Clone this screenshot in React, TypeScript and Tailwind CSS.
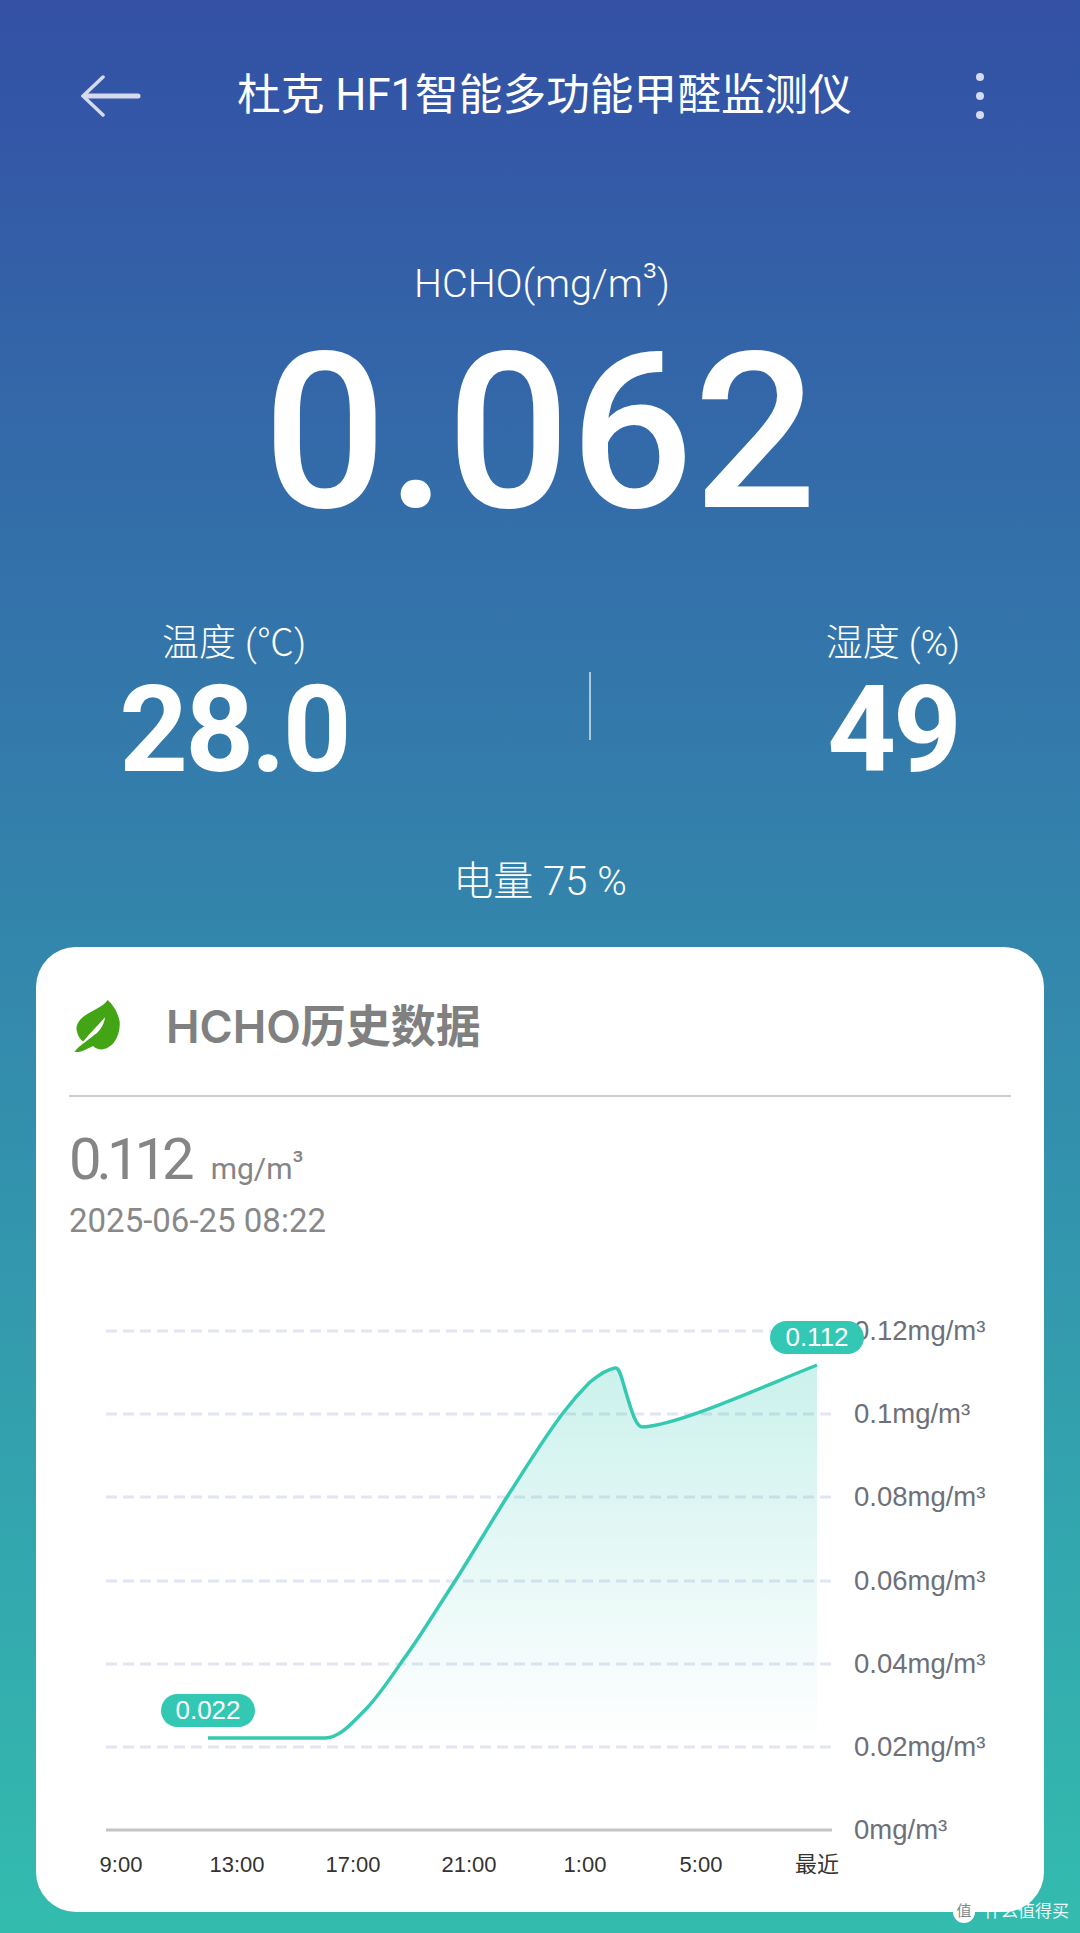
import React from 'react';

const gridLines = [1331, 1414, 1497, 1581, 1664, 1747];
const yLabels = ['0.12mg/m³', '0.1mg/m³', '0.08mg/m³', '0.06mg/m³', '0.04mg/m³', '0.02mg/m³', '0mg/m³'];
const xLabels = ['9:00', '13:00', '17:00', '21:00', '1:00', '5:00', '最近'];

// chart drawing is kept in page coordinates, the svg viewBox is offset to match
const LINE = 'M208 1738 L325 1738 C340 1738 352 1723 367 1708 C380 1694 392 1676 403 1660 C412 1648 421 1634 430 1620 C439 1606 448 1592 457 1578 C474 1551 490 1524 507 1497 C525 1469 544 1438 563 1413 C572 1401 581 1391 590 1382 C600 1374 608 1369 615 1368 C620 1367 622 1380 627 1396 C632 1412 636 1427 643 1427 C680 1424 750 1392 817 1365';
const AREA = LINE + ' L817 1830 L208 1830 Z';

function Chart() {
  return (
    <svg viewBox="36 1270 1008 620" className="block w-[1008px] h-[620px] -ml-[33px]">
      <defs>
        <linearGradient id="area" x1="0" y1="1365" x2="0" y2="1745" gradientUnits="userSpaceOnUse">
          <stop offset="0" stopColor="#32c8b4" stopOpacity="0.25" />
          <stop offset="1" stopColor="#32c8b4" stopOpacity="0" />
        </linearGradient>
      </defs>
      {gridLines.map(y => (
        <line key={y} x1="106" x2="832" y1={y} y2={y} stroke="#e2e5f3" strokeWidth="3" strokeDasharray="11 6" />
      ))}
      <line x1="106" x2="832" y1="1830" y2="1830" stroke="#c4c4c4" strokeWidth="3" />
      <path d={AREA} fill="url(#area)" />
      <path d={LINE} fill="none" stroke="#36c9b2" strokeWidth="3.5" strokeLinejoin="round" />
      {yLabels.map((t, i) => (
        <text key={t} x="854" y={1331 + i * 83.2 + 9} fontSize="27.5" fill="#6e7079">{t}</text>
      ))}
      {xLabels.map((t, i) => (
        <text key={t} x={121 + i * 116} y="1872" fontSize="22" fill="#333" textAnchor="middle">{t}</text>
      ))}
      <rect x="770" y="1321" width="94" height="33" rx="16.5" fill="#32c8b4" />
      <text x="817" y="1346" fontSize="26" fill="#fff" textAnchor="middle">0.112</text>
      <rect x="161" y="1694" width="94" height="33" rx="16.5" fill="#32c8b4" />
      <text x="208" y="1719" fontSize="26" fill="#fff" textAnchor="middle">0.022</text>
    </svg>
  );
}

function Leaf() {
  return (
    <svg viewBox="0 0 195 210" className="w-[65px] h-[70px] shrink-0">
      <path d="M128 30 C115 50 85 60 62 75 C40 90 30 110 36 125 C38 135 45 148 55 155 C45 165 35 178 28 186 C50 188 70 175 84 168 C95 180 115 182 130 172 C155 158 166 125 164 95 C160 70 145 45 128 30 Z" fill="#43a515" />
      <path d="M120 82 C100 105 70 135 40 172 C60 158 80 140 95 130 C108 118 118 100 120 82 Z" fill="#fff" />
    </svg>
  );
}

export default function App() {
  return (
    <div className="w-[1080px] h-[1933px] overflow-hidden relative bg-gradient-to-b from-[#3350a5] to-[#33bcae] text-white font-['Roboto','Noto_Sans_CJK_SC',sans-serif]">
      {/* header */}
      <div className="h-[192px] pl-[81px] pr-[96px] flex items-center">
        <svg viewBox="0 0 60 42" className="w-[60px] h-[42px] text-[#d5daec]" fill="none" stroke="currentColor" strokeWidth="5" strokeLinecap="round">
          <path d="M22 2 L2 21 L22 40" strokeWidth="3.5" />
          <path d="M4 21 H57" />
        </svg>
        <h1 className="ml-[96px] text-[43.7px] leading-none font-normal whitespace-nowrap">杜克 HF1智能多功能甲醛监测仪</h1>
        <div className="ml-auto flex flex-col gap-[11px]">
          <span className="w-[8px] h-[8px] rounded-full bg-[#d5daec]" />
          <span className="w-[8px] h-[8px] rounded-full bg-[#d5daec]" />
          <span className="w-[8px] h-[8px] rounded-full bg-[#d5daec]" />
        </div>
      </div>

      {/* current reading */}
      <div className="mt-[68px] text-center text-[39.5px] leading-[48px] font-light pl-[4px]">
        HCHO(mg/m<span className="relative -top-[6px]">³</span>)
      </div>
      <div className="mt-[17px] text-center text-[217px] leading-[216px] font-medium">0.062</div>

      {/* temperature / humidity */}
      <div className="flex mt-[81px] ml-[84px] items-start">
        <div className="w-[300px] flex flex-col items-center">
          <div className="text-[37px] leading-[44px] font-light">温度 (℃)</div>
          <div className="text-[120px] leading-[120px] font-bold tracking-[-3px] mt-[4px]">28.0</div>
        </div>
        <div className="w-[2px] h-[68px] bg-white/60 ml-[205px] mt-[50px]" />
        <div className="w-[300px] ml-[152px] flex flex-col items-center">
          <div className="text-[37px] leading-[44px] font-light">湿度 (%)</div>
          <div className="text-[120px] leading-[120px] font-bold tracking-[-3px] mt-[4px]">49</div>
        </div>
      </div>

      <div className="text-center text-[40px] leading-[44px] font-light mt-[70px]">电量 75 %</div>

      {/* history card */}
      <div className="absolute left-[36px] top-[947px] w-[1008px] h-[965px] bg-white rounded-[40px] px-[33px] pt-[43px]">
        <div className="flex items-center gap-[36px] h-[70px] -ml-[4px]">
          <Leaf />
          <div className="mt-[3px] text-[45px] leading-none font-semibold text-[#808080] font-['Inter','Noto_Sans_CJK_SC',sans-serif]">HCHO历史数据</div>
        </div>
        <div className="h-[2px] bg-[#cccccc] mt-[35px]" />
        <div className="flex items-baseline mt-[28px] text-[#858585]">
          <span className="text-[58px] leading-[68px] font-normal tracking-[-5px]">0.112</span>
          <span className="text-[30px] ml-[21px] font-normal">mg/m<span className="relative -top-[7px]">³</span></span>
        </div>
        <div className="text-[33px] leading-[40px] text-[#888888] font-normal mt-[8px]">2025-06-25 08:22</div>
        <div className="font-['Liberation_Sans','Noto_Sans_CJK_SC',sans-serif] mt-[29px]">
          <Chart />
        </div>
      </div>

      {/* watermark */}
      <div className="absolute right-[11px] bottom-[10px] flex items-center gap-[9px] text-white/90">
        <span className="w-[22px] h-[23px] rounded-full bg-white text-[#7b8a88] flex items-center justify-center text-[15px] leading-none">值</span>
        <span className="text-[17px] leading-none">什么值得买</span>
      </div>
    </div>
  );
}
